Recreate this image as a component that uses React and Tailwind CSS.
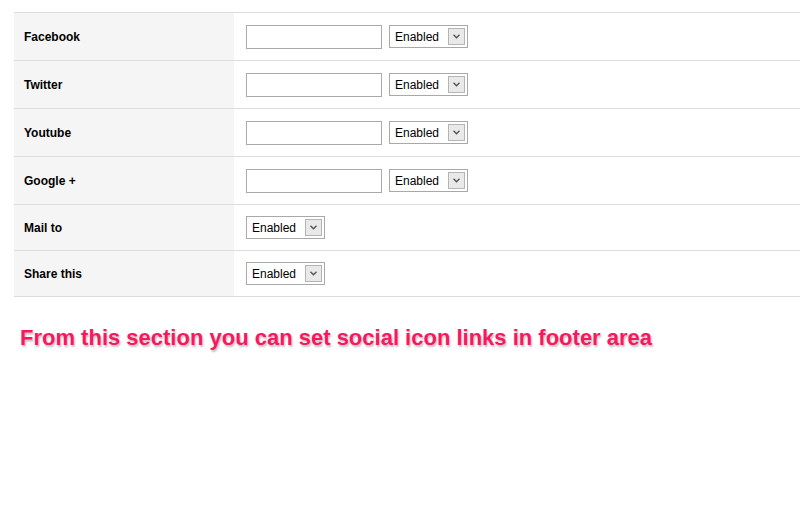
import React from "react";

const rows = [
  { label: "Facebook", input: true },
  { label: "Twitter", input: true },
  { label: "Youtube", input: true },
  { label: "Google +", input: true },
  { label: "Mail to", input: false },
  { label: "Share this", input: false },
];

function FakeSelect() {
  return (
    <div className="flex h-[23px] w-[79px] items-center justify-between border border-[#a9a9a9] bg-white pl-[5px] pr-[2px]">
      <span className="text-[12px] text-black">Enabled</span>
      <span className="flex h-[17px] w-[17px] items-center justify-center border border-[#b4b4b4] bg-[#e9e9e9]">
        <svg width="7" height="5" viewBox="0 0 7 5">
          <path d="M0.5 0.8 L3.5 3.8 L6.5 0.8" fill="none" stroke="#555" strokeWidth="1.4" />
        </svg>
      </span>
    </div>
  );
}

export default function App() {
  return (
    <div
      className="h-[518px] w-[800px] overflow-hidden bg-white"
      style={{ fontFamily: '"Liberation Sans", Arial, sans-serif' }}
    >
      <div className="pl-[14px] pt-[12px]">
        <div className="border-t border-[#dddddd]">
          {rows.map((r) => (
            <div
              key={r.label}
              className={`flex border-b border-[#dddddd] ${r.input ? "h-[48px]" : "h-[46px]"}`}
            >
              <div className="flex w-[220px] items-center bg-[#f5f5f5] pl-[10px] text-[12px] font-bold text-black">
                {r.label}
              </div>
              <div className="flex items-center gap-[7px] pl-[12px]">
                {r.input && (
                  <div className="h-[24px] w-[136px] border border-[#a9a9a9] bg-white" />
                )}
                <FakeSelect />
              </div>
            </div>
          ))}
        </div>
      </div>
      <div className="pl-[20px] pt-[28px] text-[22px] leading-[26px] font-bold text-[#fc1560] [text-shadow:1px_2px_2px_rgba(0,0,0,0.25)]">
        From this section you can set social icon links in footer area
      </div>
    </div>
  );
}
